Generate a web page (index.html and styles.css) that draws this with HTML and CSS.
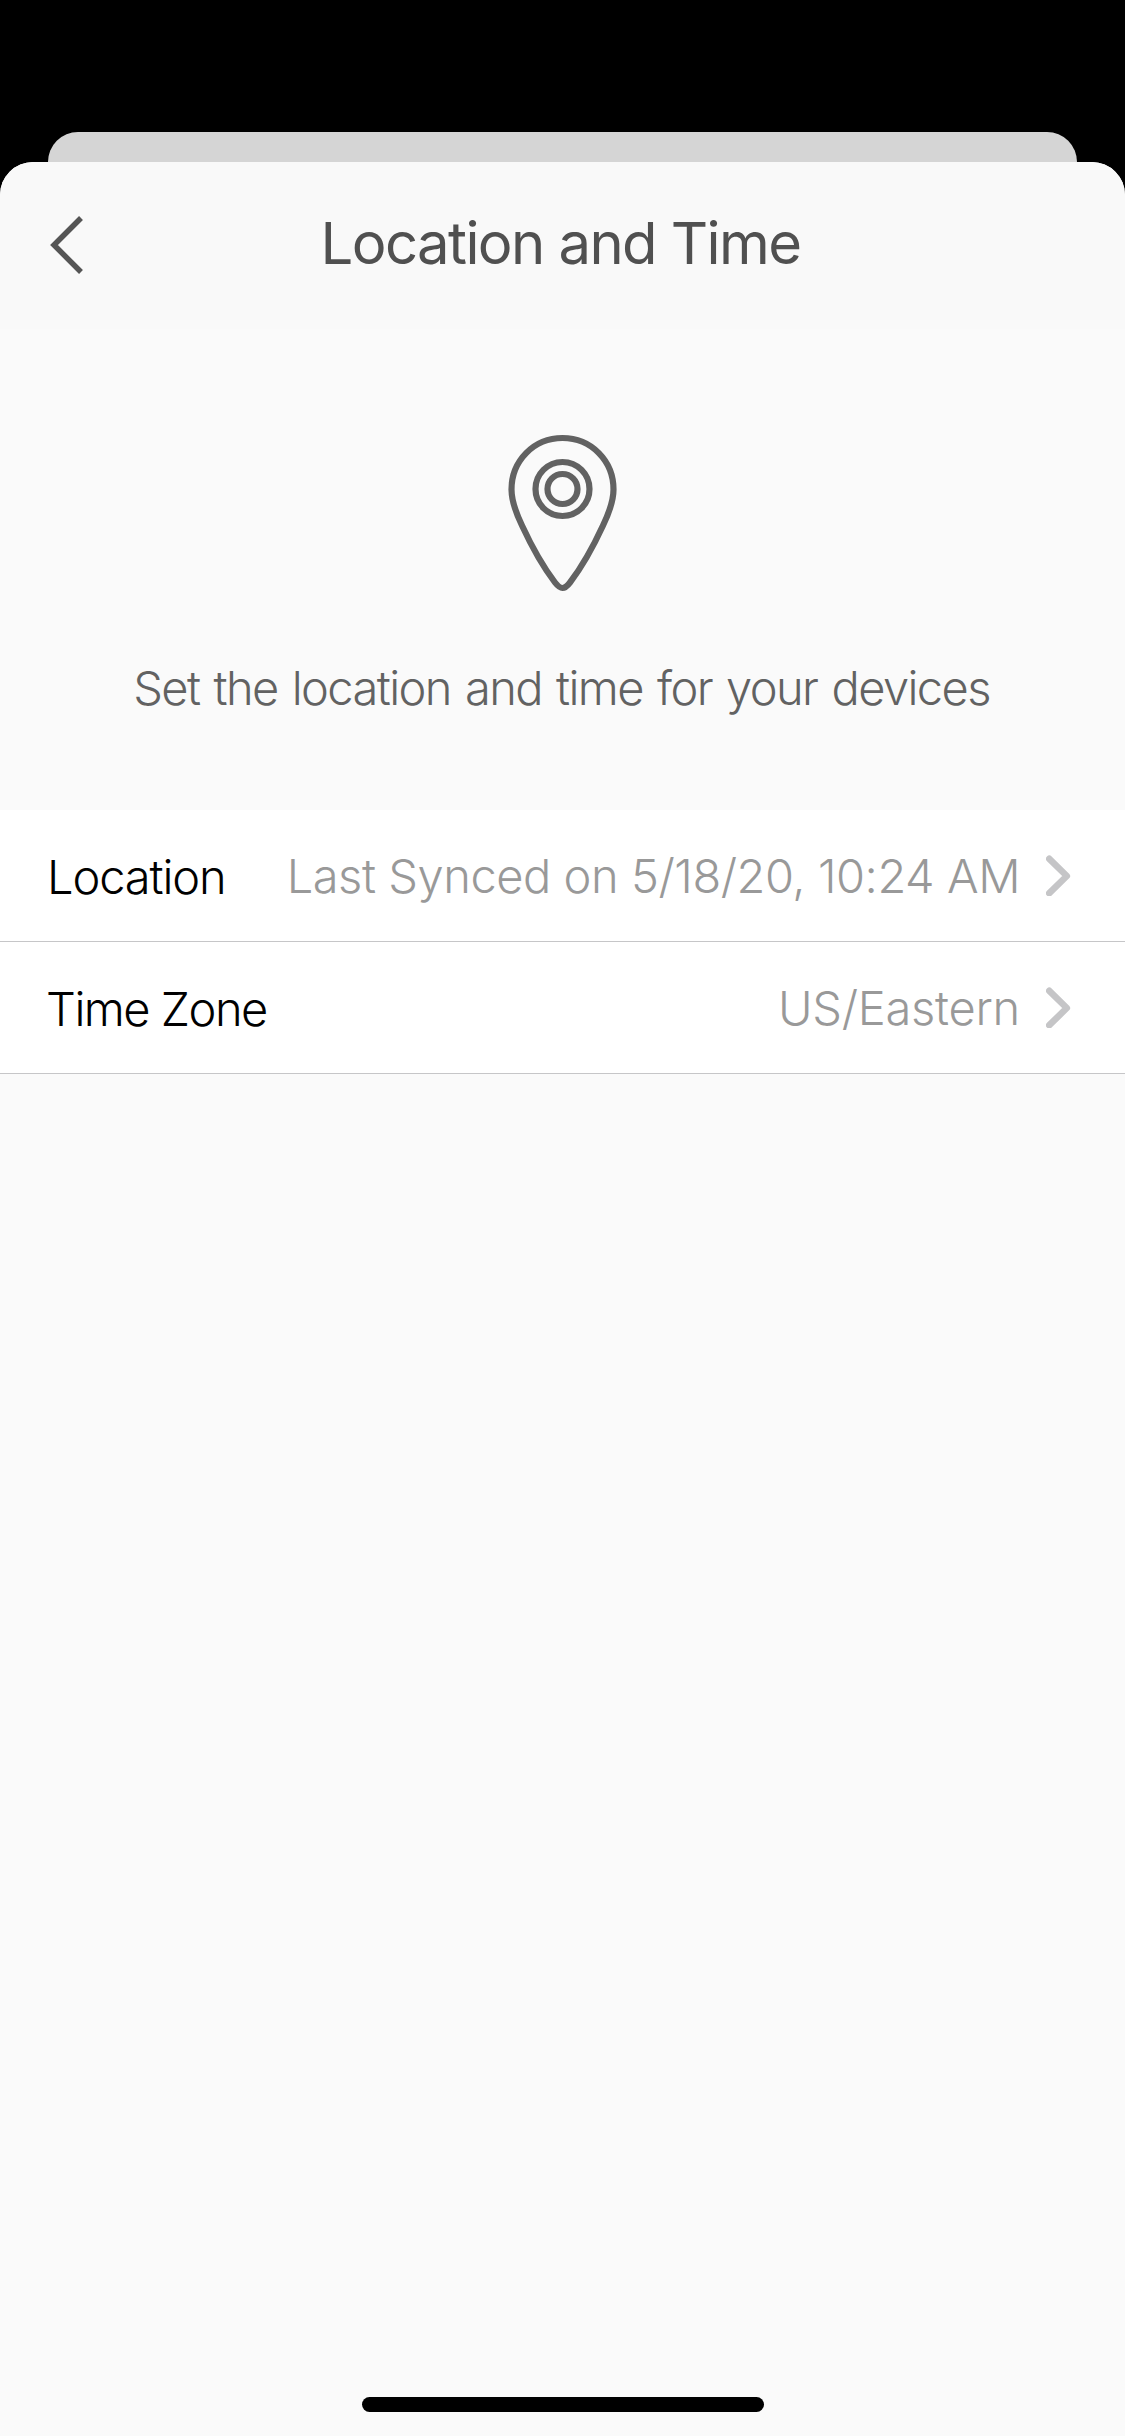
FILE: index.html
```html
<!DOCTYPE html>
<html lang="en">
<head>
<meta charset="utf-8">
<title>Location and Time</title>
<link rel="stylesheet" href="styles.css">
</head>
<body>
<div class="screen">
  <div class="sheet-behind"></div>
  <main class="sheet">
    <header class="header">
      <svg class="back" viewBox="0 0 34 60" width="34" height="60"><path d="M31 3 4 30 31 57" fill="none" stroke="#555" stroke-width="5.500"/></svg>
      <h1 class="title">Location and Time</h1>
    </header>
    <section class="intro">
      <svg class="pin" viewBox="0 0 109 158" width="109" height="158" fill="none" stroke="#626262" stroke-width="6.200">
        <path d="M54.500 4C25.500 4 3.500 27 3.500 55.500C3.500 68 8 79 14 91.500C23 111 36 134 47 148.500C49.500 151.700 52 154 54.500 154C57 154 59.500 151.700 62 148.500C73 134 86 111 95 91.500C101 79 105.500 68 105.500 55.500C105.500 27 83.500 4 54.500 4Z"/>
        <circle cx="54.500" cy="55" r="27"/>
        <circle cx="54.500" cy="55" r="15"/>
      </svg>
      <p class="lead">Set the location and time for your devices</p>
    </section>
    <section class="list">
      <div class="row">
        <span class="label">Location</span>
        <span class="value">Last Synced on 5/18/20, 10:24 AM</span>
        <svg class="chevron" viewBox="0 0 25 41" width="25" height="41"><path d="M3.300 3.800 20.800 21 3.300 38.200"/></svg>
      </div>
      <div class="row">
        <span class="label zone">Time Zone</span>
        <span class="value region">US/Eastern</span>
        <svg class="chevron" viewBox="0 0 25 41" width="25" height="41"><path d="M3.300 3.800 20.800 21 3.300 38.200"/></svg>
      </div>
    </section>
    <div class="home-bar"></div>
  </main>
</div>
</body>
</html>
```
FILE: styles.css
```css
* { box-sizing: border-box; margin: 0; }
body {
  background: #000;
  font-family: Inter, "Liberation Sans", sans-serif;
}
.screen {
  height: 2436px;
  padding-top: 132px;
  display: flex;
  flex-direction: column;
}
.sheet-behind {
  height: 30px;
  margin: 0 48px;
  background: #d5d5d5;
  border-radius: 30px 30px 0 0;
}
.sheet {
  flex: 1;
  display: flex;
  flex-direction: column;
  background: #fafafa;
  border-radius: 33px 33px 0 0;
}
.header {
  height: 167px;
  display: grid;
  grid-template-columns: 84px 1fr 84px;
  align-items: center;
  background: #f9f9f9;
  border-radius: 33px 33px 0 0;
}
.back {
  justify-self: end;
  margin-bottom: 2px;
}
.title {
  padding: 0 4px 5px 0;
  text-align: center;
  font-size: 58px;
  font-weight: 400;
  letter-spacing: -1.6px;
  line-height: 70px;
  color: #505050;
  white-space: nowrap;
}
.intro {
  height: 481px;
  padding-top: 105px;
  display: flex;
  flex-direction: column;
  align-items: center;
}
.lead {
  margin: 66px 2px 0 0;
  font-size: 47px;
  font-weight: 300;
  letter-spacing: -1.6px;
  word-spacing: 2.5px;
  line-height: 60px;
  color: #626262;
  white-space: nowrap;
}
.row {
  height: 132px;
  padding: 0 54px 0 47px;
  display: flex;
  align-items: center;
  background: #fff;
  border-bottom: 1px solid #c6c6c8;
  font-size: 47px;
  font-weight: 300;
  line-height: 60px;
  white-space: nowrap;
}
.label {
  padding-top: 3px;
  color: #000;
  letter-spacing: -1.1px;
}
.zone {
  margin-left: -1px;
  letter-spacing: -1.5px;
}
.value {
  margin-left: auto;
  color: #999;
  letter-spacing: -.45px;
}
.region { letter-spacing: -.25px; }
.chevron {
  margin-left: 26px;
  fill: none;
  stroke: #c5c5c7;
  stroke-width: 6.6px;
  stroke-linecap: round;
  stroke-linejoin: round;
}
.home-bar {
  width: 402px;
  height: 15px;
  margin: auto auto 24px 362px;
  background: #000;
  border-radius: 8px;
}
```
